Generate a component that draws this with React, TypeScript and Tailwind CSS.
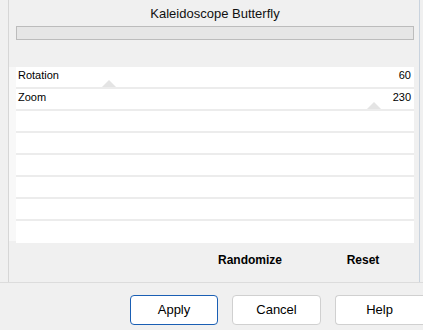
const rows = [
  { label: "Rotation", value: "60", knob: 110 },
  { label: "Zoom", value: "230", knob: 375 },
  null,
  null,
  null,
  null,
  null,
  null,
]

const Row = ({ row }: { row: { label: string; value: string; knob: number } | null }) => {
  return (
    <div className="relative h-[22px] border-b-2 border-[#ececec] bg-white last:border-b-0">
      {row && (
        <>
          <div className="flex h-[17px] items-center justify-between pl-[2px] pr-[3px] text-[11px] text-black">
            <span>{row.label}</span>
            <span>{row.value}</span>
          </div>
          <div
            className="absolute bottom-0 h-0 w-0 border-x-[7px] border-b-[7px] border-x-transparent border-b-[#e4e4e4]"
            style={{ left: row.knob - 17 - 7 }}
          />
        </>
      )}
    </div>
  )
}

export default function App() {
  return (
    <div
      className="flex h-[330px] w-[423px] flex-col overflow-hidden bg-[#f0f0f0]"
      style={{ fontFamily: '"Liberation Sans", Arial, sans-serif' }}>
      <div className="flex h-[283px] border-b border-[#dcdcdc]">
        <div className="w-[9px] shrink-0 border-r border-[#d6d6d6]" />
        <div className="flex w-[7px] shrink-0 flex-col">
          <div className="h-[67px]" />
          <div className="h-[174px] bg-[#f8f8f8]" />
        </div>
        <div className="flex w-[398px] shrink-0 flex-col">
          <div className="flex h-[26px] items-center justify-center pt-[2px] text-[13px] text-[#111]">
            Kaleidoscope Butterfly
          </div>
          <div className="h-[14px] border border-[#bcbcbc] bg-[#e6e6e6]" />
          <div className="h-[27px]" />
          <div className="flex flex-col bg-white">
            {rows.map((r, i) => (
              <Row key={i} row={r} />
            ))}
          </div>
          <div className="flex h-[38px] items-center pb-[4px] text-[12px] font-bold text-black">
            <div className="w-[201px]" />
            <div className="w-[66px] text-center">Randomize</div>
            <div className="w-[62px]" />
            <div className="w-[36px] text-center">Reset</div>
          </div>
        </div>
        <div className="w-[5px] shrink-0" />
        <div className="w-[1px] shrink-0 bg-[#c9d3de]" />
      </div>
      <div className="flex justify-end gap-[14px] pt-[12px] text-[13px] text-black">
        <button className="h-[30px] w-[88px] rounded-[4px] border border-[#1a5fb4] bg-white">Apply</button>
        <button className="h-[30px] w-[89px] rounded-[4px] border border-[#d0d0d0] bg-white">Cancel</button>
        <button className="h-[30px] w-[88px] rounded-l-[4px] border border-r-0 border-[#d0d0d0] bg-white">Help</button>
      </div>
    </div>
  )
}
